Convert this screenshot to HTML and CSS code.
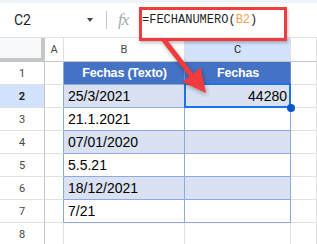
FILE: index.html
```html
<!DOCTYPE html>
<html>
<head>
<meta charset="utf-8">
<link rel="stylesheet" href="styles.css">
</head>
<body>
<div class="page">
  <div class="topband"></div>
  <div class="fbar">
    <div class="namebox"><span>C2</span><span class="caret"></span></div>
    <div class="sep"></div>
    <div class="fx">fx</div>
    <div class="formula">=FECHANUMERO(<span class="ref">B2</span>)</div>
  </div>
  <div class="grid">
    <div class="c corner"></div><div class="c ch">A</div><div class="c ch">B</div><div class="c ch sel">C</div><div class="c ch"></div>

    <div class="c rh">1</div><div class="c a t"></div><div class="c th">Fechas (Texto)</div><div class="c th">Fechas</div><div class="c d"></div>
    <div class="c rh selr">2</div><div class="c a t"></div><div class="c tb band">25/3/2021</div><div class="c tb band num active">44280<span class="handle"></span></div><div class="c d"></div>
    <div class="c rh">3</div><div class="c a t"></div><div class="c tb">21.1.2021</div><div class="c tb"></div><div class="c d"></div>
    <div class="c rh">4</div><div class="c a t"></div><div class="c tb band">07/01/2020</div><div class="c tb band"></div><div class="c d"></div>
    <div class="c rh">5</div><div class="c a t"></div><div class="c tb">5.5.21</div><div class="c tb"></div><div class="c d"></div>
    <div class="c rh">6</div><div class="c a t"></div><div class="c tb band">18/12/2021</div><div class="c tb band"></div><div class="c d"></div>
    <div class="c rh">7</div><div class="c a t"></div><div class="c tb">7/21</div><div class="c tb"></div><div class="c d"></div>
    <div class="c rh">8</div><div class="c a"></div><div class="c"></div><div class="c"></div><div class="c d"></div>
  </div>
  <div class="redbox"></div>
  <svg class="arrow" width="317" height="244" viewBox="0 0 317 244">
    <line x1="164" y1="40" x2="192" y2="76" stroke="#f03c3c" stroke-width="5"/>
    <polygon points="206,93 182.5,82 200.5,67.5" fill="#f03c3c"/>
  </svg>
</div>
</body>
</html>
```
FILE: styles.css
```css
* { box-sizing: border-box; }
html, body { margin: 0; padding: 0; background: #fff; }
.page {
  position: relative;
  width: 317px;
  height: 244px;
  overflow: hidden;
  font-family: Roboto, "Liberation Sans", sans-serif;
}
.topband { height: 3px; background: #eef2f9; }
.fbar {
  height: 35px;
  display: flex;
  align-items: center;
  border-bottom: 1px solid #e1e3e1;
}
.namebox {
  width: 96px;
  display: flex;
  align-items: center;
  justify-content: space-between;
  padding: 0 3px 0 14px;
  font-size: 14px;
  color: #1f1f1f;
}
.caret {
  width: 0; height: 0;
  border-left: 3.5px solid transparent;
  border-right: 3.5px solid transparent;
  border-top: 4px solid #444746;
}
.sep { width: 1px; height: 18px; background: #c4c7c5; margin-left: 10px; }
.fx {
  margin-left: 11px;
  width: 16px;
  font-family: "Liberation Serif", serif;
  font-style: italic;
  font-size: 17px;
  color: #a4a8ad;
  letter-spacing: -1px;
}
.formula {
  margin-left: 8px;
  font-family: "Liberation Mono", monospace;
  font-size: 12px;
  color: #1f1f1f;
}
.ref { color: #f29d56; }
.grid {
  display: grid;
  grid-template-columns: 45px 19px 121px 106px 26px;
  grid-template-rows: 24px repeat(8, 23px);
}
.c {
  border-right: 1px solid #e1e1e1;
  border-bottom: 1px solid #e1e1e1;
  font-size: 14px;
  font-family: "Liberation Sans", Arial, sans-serif;
  color: #000;
  display: flex;
  align-items: center;
  padding: 0 3px 0 4px;
  white-space: nowrap;
  position: relative;
}
.corner {
  background: #f8f9fa;
  border-right: 4px solid #c4c7c5;
  border-bottom: 4px solid #c4c7c5;
}
.ch {
  justify-content: center;
  font-family: Roboto, sans-serif;
  font-size: 11px;
  color: #444746;
  border-bottom-color: #c4c7c5;
  padding: 0;
}
.ch.sel { background: #d3e3fd; color: #1f1f1f; }
.rh {
  justify-content: center;
  font-family: Roboto, sans-serif;
  font-size: 11px;
  color: #444746;
  padding: 0;
  border-right-color: #c4c7c5;
}
.rh.selr { background: #d3e3fd; font-weight: bold; color: #1f1f1f; }
.a.t { border-right-color: #8eaadb; }
.th {
  background: #4472c4;
  color: #fff;
  font-weight: bold;
  font-size: 12.5px;
  letter-spacing: -0.2px;
  justify-content: center;
  border-right-color: #6a8fd0;
  border-bottom-color: #8eaadb;
}
.tb { border-right-color: #8eaadb; border-bottom-color: #8eaadb; }
.band { background: #d9e1f2; }
.num { justify-content: flex-end; }
.active::after {
  content: "";
  position: absolute;
  top: -2px; left: -1px; right: -1px; bottom: -1px;
  border: 2px solid #1a73e8;
}
.handle {
  position: absolute;
  right: -5px;
  bottom: -5px;
  width: 8px; height: 8px;
  border-radius: 50%;
  background: #0b57d0;
  z-index: 2;
}
.redbox {
  position: absolute;
  left: 139px; top: 7px;
  width: 148px; height: 34px;
  border: 3.5px solid #f03c3c;
  box-shadow: 1px 2px 3px rgba(0,0,0,0.25);
}
.arrow {
  position: absolute;
  left: 0; top: 0;
  filter: drop-shadow(1px 2px 2px rgba(0,0,0,0.3));
}
```
